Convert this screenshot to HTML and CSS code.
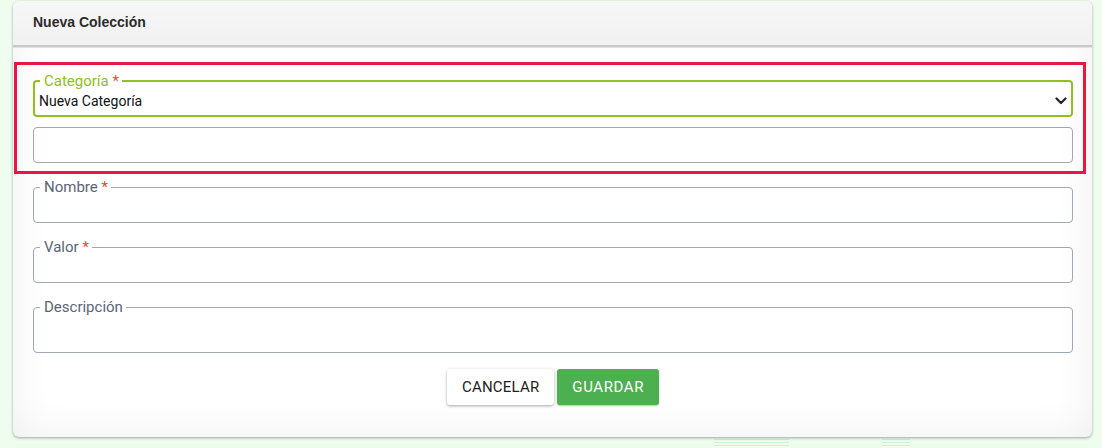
FILE: index.html
```html
<!DOCTYPE html>
<html lang="es">
<head>
    <meta charset="UTF-8">
    <title>Nueva Colección</title>
    <link rel="stylesheet" href="styles.css">
</head>
<body>
    <div class="card">
        <div class="card-header">Nueva Colección</div>
        <form class="card-body">
            <div class="highlight">
                <fieldset class="field field-active">
                    <legend>Categoría <span class="req">*</span></legend>
                    <div class="select">
                        <span>Nueva Categoría</span>
                        <svg width="12" height="8" viewBox="0 0 12 8"><path d="M1.5 1.5 L6 6 L10.5 1.5" fill="none" stroke="#222" stroke-width="2.2" stroke-linecap="round" stroke-linejoin="round"/></svg>
                    </div>
                </fieldset>
                <div class="plain-input"></div>
            </div>
            <fieldset class="field">
                <legend>Nombre <span class="req">*</span></legend>
                <div class="input"></div>
            </fieldset>
            <fieldset class="field">
                <legend>Valor <span class="req">*</span></legend>
                <div class="input"></div>
            </fieldset>
            <fieldset class="field">
                <legend>Descripción</legend>
                <div class="input textarea"></div>
            </fieldset>
            <div class="actions">
                <button type="button" class="btn btn-cancel">CANCELAR</button>
                <button type="button" class="btn btn-save">GUARDAR</button>
            </div>
        </form>
    </div>
</body>
</html>
```

FILE: styles.css
```css
body {
    margin: 0;
    height: 448px;
    font-family: Roboto, "Liberation Sans", sans-serif;
    background-color: #effdef;
    background-image:
        repeating-linear-gradient(0deg, rgba(120, 200, 130, 0.25) 0 1px, transparent 1px 3px),
        repeating-linear-gradient(0deg, rgba(120, 200, 130, 0.25) 0 1px, transparent 1px 3px);
    background-size: 75px 12px, 28px 12px;
    background-position: 714px 437px, 882px 437px;
    background-repeat: no-repeat;
    overflow: hidden;
}

.card {
    margin: 1px 0 0 13px;
    width: 1079px;
    height: 436px;
    box-sizing: border-box;
    background: #fff;
    border-radius: 6px;
    box-shadow: 0 1px 3px rgba(0, 0, 0, 0.35), inset 0 0 40px rgba(0, 0, 0, 0.07);
    display: flex;
    flex-direction: column;
}

.card-header {
    height: 46px;
    box-sizing: border-box;
    padding: 13px 0 0 20px;
    font-family: "Liberation Sans", Arial, sans-serif;
    font-weight: bold;
    font-size: 14px;
    color: #2b2b2b;
    background: linear-gradient(180deg, #f7f7f7, #f1f1f1);
    border-radius: 6px 6px 0 0;
    border-bottom: 2px solid #c9c9c9;
    box-shadow: 0 1px 0 #e2e2e2;
}

.card-body {
    padding: 15px 19px 0 20px;
    display: flex;
    flex-direction: column;
}

.highlight {
    margin: 0 -13px 0 -19px;
    padding: 7px 10px 8px 16px;
    border: 3px solid #ea163d;
    display: flex;
    flex-direction: column;
    gap: 10px;
}

.field {
    margin: 0;
    padding: 0 4px 0 4px;
    border: 1px solid #a3a7b1;
    border-radius: 4px;
    min-width: 0;
}

.field legend {
    margin-left: 2px;
    padding: 0 3px 0 4px;
    font-size: 15px;
    line-height: 18px;
    color: #5b6475;
}

.req { color: #f44336; }

.field-active {
    border: 2px solid #93c01f;
}

.field-active legend {
    color: #8cc21a;
    margin-left: 1px;
}

.select {
    height: 25px;
    display: flex;
    align-items: center;
    justify-content: space-between;
    padding: 0 0 3px 0;
    box-sizing: border-box;
    font-size: 14px;
    color: #111;
}

.plain-input {
    height: 36px;
    box-sizing: border-box;
    border: 1px solid #a3a7b1;
    border-radius: 4px;
}

.input { height: 26px; }
.textarea { height: 36px; }

.card-body > .field { margin-top: 4px; }
.card-body > .field + .field { margin-top: 15px; }

.actions {
    display: flex;
    justify-content: center;
    gap: 3px;
    margin-top: 16px;
}

.btn {
    height: 36px;
    padding: 0 15px;
    border: none;
    border-radius: 3px;
    font-family: Roboto, sans-serif;
    font-size: 15px;
    letter-spacing: 0.2px;
}

.btn-cancel {
    background: #fff;
    color: #222;
    box-shadow: 0 1px 3px rgba(0, 0, 0, 0.35);
}

.btn-save {
    background: #4caf50;
    color: #fff;
    letter-spacing: 0.6px;
    box-shadow: 0 1px 2px rgba(0, 0, 0, 0.25);
}
```
